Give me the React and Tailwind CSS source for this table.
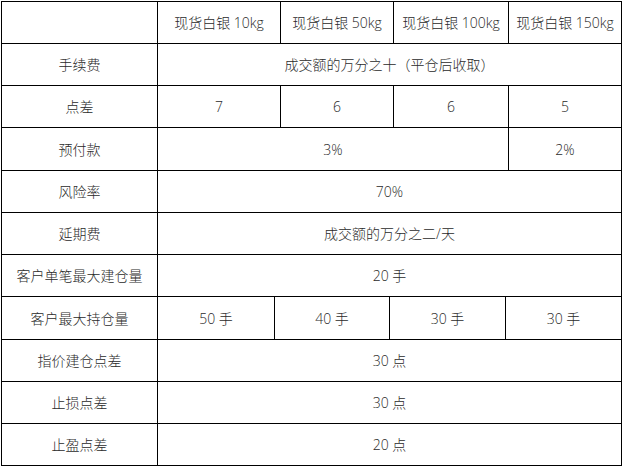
import React from "react";

const Cell = ({ w, children }) => (
  <div
    className="flex items-center justify-center border-r border-black shrink-0 h-full"
    style={{ width: w }}
  >
    {children}
  </div>
);

const rows = [
  { h: "h-[42px]", cells: [["", 156], ["现货白银 10kg", 123], ["现货白银 50kg", 113], ["现货白银 100kg", 115], ["现货白银 150kg", 113]] },
  { h: "h-[42px]", cells: [["手续费", 156], ["成交额的万分之十（平仓后收取）", 464]] },
  { h: "h-[42px]", cells: [["点差", 156], ["7", 123], ["6", 113], ["6", 115], ["5", 113]] },
  { h: "h-[43px]", cells: [["预付款", 156], ["3%", 351], ["2%", 113]] },
  { h: "h-[42px]", cells: [["风险率", 156], ["70%", 464]] },
  { h: "h-[42px]", cells: [["延期费", 156], ["成交额的万分之二/天", 464]] },
  { h: "h-[42px]", cells: [["客户单笔最大建仓量", 156], ["20 手", 464]] },
  { h: "h-[43px]", cells: [["客户最大持仓量", 156], ["50 手", 117], ["40 手", 115], ["30 手", 116], ["30 手", 116]] },
  { h: "h-[42px]", cells: [["指价建仓点差", 156], ["30 点", 464]] },
  { h: "h-[42px]", cells: [["止损点差", 156], ["30 点", 464]] },
  { h: "h-[42px]", cells: [["止盈点差", 156], ["20 点", 464]] },
];

export default function App() {
  return (
    <div className="w-[623px] h-[467px] bg-white pt-[1px] pl-[1px]">
      <div
        className="w-[621px] border-l border-t border-black text-[14px] font-light text-[#2a2a2a]"
        style={{ fontFamily: '"Open Sans", "Noto Sans CJK SC", sans-serif' }}
      >
        {rows.map((r, i) => (
          <div key={i} className={`flex border-b border-black ${r.h}`}>
            {r.cells.map(([t, w], j) => (
              <Cell key={j} w={w}>
                {t}
              </Cell>
            ))}
          </div>
        ))}
      </div>
    </div>
  );
}
